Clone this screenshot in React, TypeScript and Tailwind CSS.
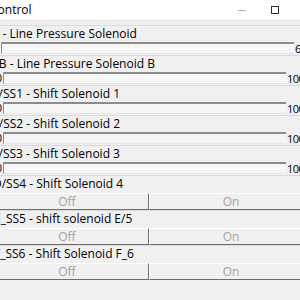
import React from "react";

// Solenoid control window, left and right edges clipped by the viewport.

type SliderRow = { label: string; shift: string; min: string; max: string; minW: string; maxW: string };
type ToggleRow = { label: string; shift: string };

const sliders: SliderRow[] = [
  { label: "PCA - Line Pressure Solenoid", shift: "ml-[-8px]", min: "", max: "60", minW: "w-[16px]", maxW: "w-[19px]" },
  { label: "PCB - Line Pressure Solenoid B", shift: "ml-[-1px]", min: "0", max: "100", minW: "w-[18px]", maxW: "w-[27px]" },
  { label: "A/SS1 - Shift Solenoid 1", shift: "ml-[6px]", min: "0", max: "100", minW: "w-[18px]", maxW: "w-[27px]" },
  { label: "B/SS2 - Shift Solenoid 2", shift: "ml-[6px]", min: "0", max: "100", minW: "w-[18px]", maxW: "w-[27px]" },
  { label: "C/SS3 - Shift Solenoid 3", shift: "ml-[6px]", min: "0", max: "100", minW: "w-[18px]", maxW: "w-[27px]" },
];

const toggles: ToggleRow[] = [
  { label: "D/SS4 - Shift Solenoid 4", shift: "ml-[8px]" },
  { label: "E_SS5 - shift solenoid E/5", shift: "ml-[9px]" },
  { label: "F_SS6 - Shift Solenoid F_6", shift: "ml-[9px]" },
];

function Slider({ row }: { row: SliderRow }) {
  return (
    <div className="h-[30px] border-t border-[#dadada] flex flex-col">
      <div className={`h-[15px] leading-[15px] whitespace-nowrap ${row.shift}`}>{row.label}</div>
      <div className="flex items-center h-[12px] mt-px">
        <span className={`${row.minW} text-right pr-px leading-[12px] text-[11px]`}>{row.min}</span>
        <div className="flex-1 h-[12px] border-t-2 border-l border-[#8c8c8c] border-b border-b-[#e8e8e8] bg-[#f6f6f6]" />
        <span className={`${row.maxW} pl-px leading-[12px] text-[11px] tracking-[-0.5px] pt-[2px]`}>{row.max}</span>
      </div>
    </div>
  );
}

function Toggle({ row }: { row: ToggleRow }) {
  return (
    <div className="h-[35px] border-t border-[#dadada] flex flex-col">
      <div className={`h-[15px] leading-[15px] whitespace-nowrap ${row.shift}`}>{row.label}</div>
      <div className="flex h-[17px] mt-[2px]">
        <button className="flex-1 border-t border-l border-white border-r border-b border-r-[#6e6e6e] border-b-[#6e6e6e] bg-[#f0f0f0] text-[#a3a3a3] leading-[14px]">
          Off
        </button>
        <button className="flex-1 border-t border-l border-white border-r border-b border-r-[#6e6e6e] border-b-[#6e6e6e] bg-[#f0f0f0] text-[#a3a3a3] leading-[14px]">
          On
        </button>
      </div>
    </div>
  );
}

export default function App() {
  return (
    <div className="relative w-[300px] h-[300px] overflow-hidden bg-[#f0f0f0] text-[12px] text-black font-['Open_Sans',sans-serif]">
      <div className="h-[20px] bg-white flex items-center justify-between pr-[21px]">
        <span className="text-[12px] ml-[-10px] whitespace-nowrap">Control</span>
        <div className="flex items-center gap-[25px]">
          <div className="w-[8px] h-px bg-[#b5b5b5]" />
          <div className="w-[8px] h-[8px] border border-[#333]" />
        </div>
      </div>
      <div className="h-[5px] border-t border-[#e6e6e6]" />
      <div className="ml-[-15px] w-[328px]">
        {sliders.map((r) => (
          <Slider key={r.label} row={r} />
        ))}
        {toggles.map((r) => (
          <Toggle key={r.label} row={r} />
        ))}
      </div>
    </div>
  );
}
